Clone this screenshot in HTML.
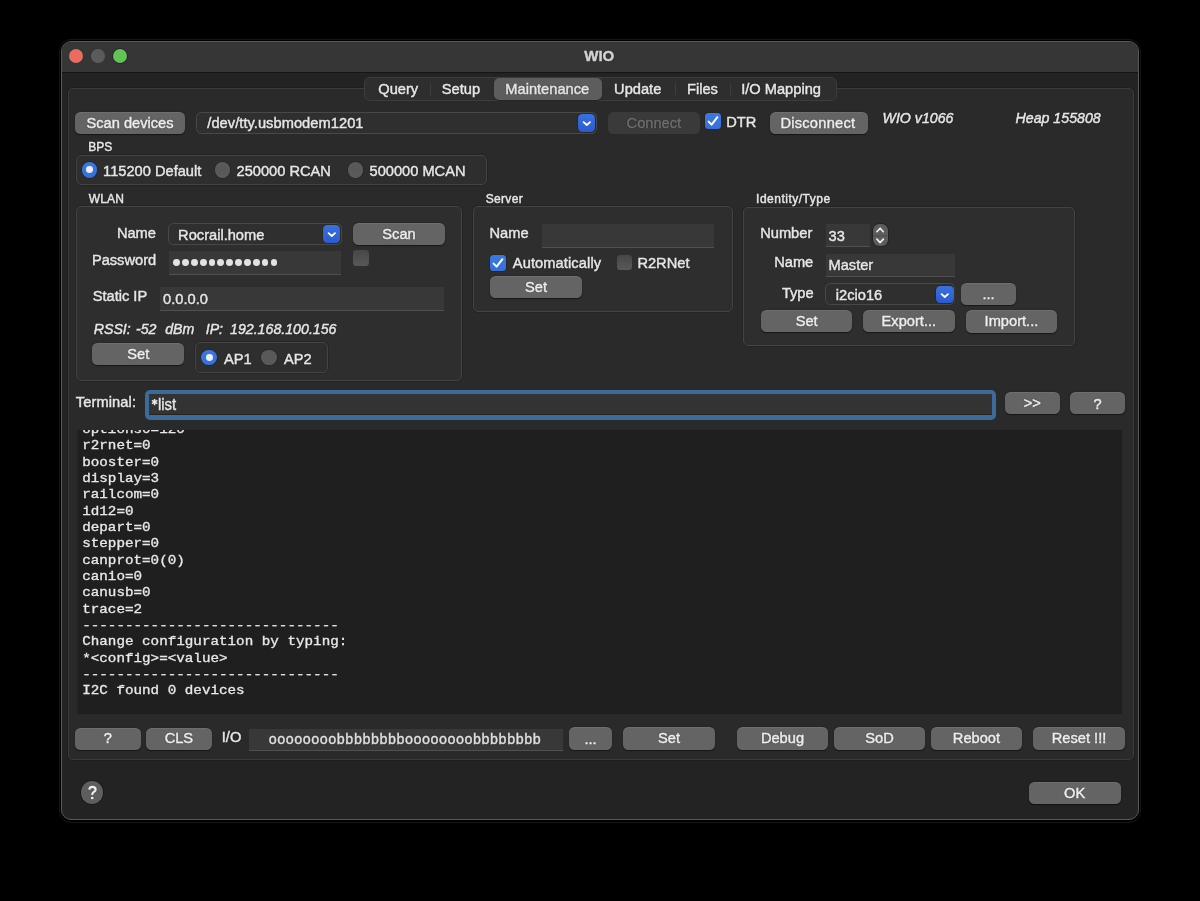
<!DOCTYPE html>
<html><head><meta charset="utf-8">
<style>
*{margin:0;padding:0;box-sizing:border-box}
html,body{width:1200px;height:901px;background:#000;overflow:hidden}
body{font-family:"Liberation Sans",sans-serif;font-size:14.65px;color:#e6e6e6}
#root{position:absolute;left:0;top:0;width:1200px;height:901px;will-change:transform;background:#000;overflow:hidden}
.a{position:absolute}
.win{background:#232323;border-radius:10px;border:1px solid #595959;overflow:hidden}
.title{left:0;top:0;width:100%;height:31px;background:#363636;border-bottom:1px solid #151515}
.tl{width:14px;height:14px;border-radius:50%}
.lbl{white-space:nowrap;line-height:17px;-webkit-text-stroke:0.45px currentColor;text-shadow:0 0 1.2px rgba(0,0,0,.8)}
.btn span{-webkit-text-stroke:0.45px currentColor;text-shadow:0 0 1.2px rgba(0,0,0,.8)}
.btn{background:#646464;border-radius:5.5px;text-align:center;white-space:nowrap;color:#eeeeee;box-shadow:inset 0 1px 0 rgba(255,255,255,.07),0 0.5px 1.2px rgba(0,0,0,.5)}
.btn span{line-height:17px}
.box{border:1px solid #444;background:#2e2e2e;border-radius:5px;box-shadow:0 0 0 0.8px rgba(0,0,0,.18)}
.fld{background:#383838;border-bottom:1px solid #505050}
.combo{background:#2f2f2f;border:1px solid #484848;border-radius:5.5px}
.arrow{background:linear-gradient(#3a70e0,#2a5bd0);border-radius:4.5px;box-shadow:0 0 0 0.6px #2a2415}
.radio{width:15.6px;height:15.6px;border-radius:50%;background:radial-gradient(circle at 50% 45%,#585858 0,#5a5a5a 60%,#666 100%);box-shadow:0 0 0 0.7px #262626}
.radio.on{background:linear-gradient(#3c77e2,#3570da)}
.radio.on::after{content:"";position:absolute;left:4.4px;top:4.4px;width:6.8px;height:6.8px;border-radius:50%;background:#eaf0fa}
.chk{border-radius:3.5px;background:linear-gradient(#474747,#585858)}
.chk.on{background:linear-gradient(#3c77e2,#3570da);box-shadow:0 0 0 0.6px #2a2415}
.it{font-style:italic}
.term{font-family:"Liberation Mono",monospace;font-size:14.25px;line-height:16.33px;color:#e8e8e8;white-space:pre;-webkit-text-stroke:0.35px currentColor}
</style></head><body>
<div id="root">
<div class="a" style="left:59px;top:39px;width:1082px;height:784px;border-radius:12px;border:1px solid #161616"></div>
<div class="a win" style="left:61px;top:41px;width:1078px;height:779px"><div class="a title"></div></div>
<div class="a tl" style="left:69.3px;top:49.2px;background:#ed6a5e;box-shadow:0 0 0 0.8px #1f3a3a"></div>
<div class="a tl" style="left:91.2px;top:49.2px;background:#5b5b5b;box-shadow:0 0 0 0.8px #383838"></div>
<div class="a tl" style="left:113.2px;top:49.2px;background:#61c554;box-shadow:0 0 0 0.8px #2a1a33"></div>
<div class="a lbl " style="left:584.3px;top:47.35px;font-size:15px;width:31px;font-weight:bold;color:#d2d2d2">WIO</div>
<div class="a box" style="left:67.5px;top:88.3px;width:1066.3px;height:672.1px;background:#2a2a2a;border:1.4px solid #3c3c3c;border-radius:5px"></div>
<div class="a" style="left:364.2px;top:77.2px;width:472.8px;height:24px;background:#2e2e2e;border:1px solid #3d3d3d;border-radius:6px"></div>
<div class="a" style="left:494px;top:78.25px;width:107.7px;height:21.5px;background:#5d5d5d;border-radius:5px;box-shadow:0 0.5px 1px rgba(0,0,0,.4)"></div>
<div class="a" style="left:429.8px;top:83px;width:1px;height:12px;background:#3e3e3e"></div>
<div class="a" style="left:675.4px;top:83px;width:1px;height:12px;background:#3e3e3e"></div>
<div class="a" style="left:730.2px;top:83px;width:1px;height:12px;background:#3e3e3e"></div>
<div class="a lbl " style="left:378.25px;top:81.42px;font-size:14.65px;">Query</div>
<div class="a lbl " style="left:441.8px;top:81.42px;font-size:14.65px;">Setup</div>
<div class="a lbl " style="left:505.3px;top:81.42px;font-size:14.65px;">Maintenance</div>
<div class="a lbl " style="left:614.1px;top:81.42px;font-size:14.65px;">Update</div>
<div class="a lbl " style="left:687.0px;top:81.42px;font-size:14.65px;">Files</div>
<div class="a lbl " style="left:741.2px;top:81.42px;font-size:14.65px;">I/O Mapping</div>
<div class="a btn " style="left:75px;top:112px;width:110px;height:22px;"><span style="position:absolute;left:0;right:0;top:3.22px;font-size:14.65px;">Scan devices</span></div>
<div class="a combo" style="left:196.3px;top:112.3px;width:400.5px;height:21.4px"></div>
<div class="a arrow" style="left:577.5px;top:114.1px;width:17.8px;height:17.8px"><svg width="18" height="18" viewBox="0 0 18 18" style="position:absolute;left:0;top:0"><path d="M5.6 8.1 L8.8 11.0 L12.0 8.1" fill="none" stroke="#fff" stroke-width="1.8" stroke-linecap="round" stroke-linejoin="round"/></svg></div>
<div class="a lbl " style="left:207.3px;top:115.02px;font-size:14.65px;letter-spacing:0.05px">/dev/tty.usbmodem1201</div>
<div class="a btn " style="left:608px;top:112px;width:91.7px;height:21.7px;background:#3a3a3a;box-shadow:none"><span style="position:absolute;left:0;right:0;top:2.72px;font-size:14.65px;color:#6e6e6e">Connect</span></div>
<div class="a chk on" style="left:705px;top:113px;width:15.5px;height:15.5px"><svg width="16" height="16" viewBox="0 0 16 16" style="position:absolute;left:0;top:0"><path d="M3.6 8.6 L6.6 11.6 L12.4 4.2" fill="none" stroke="#fff" stroke-width="2" stroke-linecap="round" stroke-linejoin="round"/></svg></div>
<div class="a lbl " style="left:726.3px;top:114.12px;font-size:14.65px;">DTR</div>
<div class="a btn " style="left:770.3px;top:112px;width:97.7px;height:22.2px;"><span style="position:absolute;left:0;right:0;top:2.82px;font-size:14.65px;letter-spacing:0.25px;padding-right:2.6px">Disconnect</span></div>
<div class="a lbl it" style="left:882.5px;top:110.38px;font-size:14.2px;">WIO v1066</div>
<div class="a lbl it" style="left:1015.5px;top:110.18px;font-size:14.2px;">Heap 155808</div>
<div class="a lbl " style="left:88.2px;top:139.14px;font-size:12px;">BPS</div>
<div class="a box" style="left:75.5px;top:155px;width:411.5px;height:30px;"></div>
<div class="a radio on" style="left:81.65px;top:162.05px"></div>
<div class="a lbl " style="left:103.1px;top:162.72px;font-size:14.65px;">115200 Default</div>
<div class="a radio" style="left:214.5px;top:162.2px"></div>
<div class="a lbl " style="left:236.5px;top:162.72px;font-size:14.65px;">250000 RCAN</div>
<div class="a radio" style="left:347.5px;top:162.2px"></div>
<div class="a lbl " style="left:369.5px;top:162.72px;font-size:14.65px;">500000 MCAN</div>
<div class="a lbl " style="left:88.7px;top:190.94px;font-size:12px;letter-spacing:0.15px">WLAN</div>
<div class="a box" style="left:75.5px;top:206.3px;width:386.0px;height:174.7px;"></div>
<div class="a lbl " style="left:116.9px;top:225.22px;font-size:14.65px;">Name</div>
<div class="a combo" style="left:168.3px;top:223.3px;width:173.7px;height:22.0px"></div>
<div class="a arrow" style="left:322.5px;top:225.3px;width:17.8px;height:17.8px"><svg width="18" height="18" viewBox="0 0 18 18" style="position:absolute;left:0;top:0"><path d="M5.6 8.1 L8.8 11.0 L12.0 8.1" fill="none" stroke="#fff" stroke-width="1.8" stroke-linecap="round" stroke-linejoin="round"/></svg></div>
<div class="a lbl " style="left:178.1px;top:226.92px;font-size:14.65px;">Rocrail.home</div>
<div class="a btn " style="left:353px;top:223px;width:92px;height:22.3px;"><span style="position:absolute;left:0;right:0;top:2.92px;font-size:14.65px;">Scan</span></div>
<div class="a lbl " style="left:91.9px;top:252.22px;font-size:14.65px;">Password</div>
<div class="a fld" style="left:169.2px;top:251.3px;width:172.0px;height:23.4px;"></div>
<div class="a" style="left:173.2px;top:259.1px;width:6.8px;height:6.8px;border-radius:50%;background:#e2e2e2"></div><div class="a" style="left:182.05px;top:259.1px;width:6.8px;height:6.8px;border-radius:50%;background:#e2e2e2"></div><div class="a" style="left:190.9px;top:259.1px;width:6.8px;height:6.8px;border-radius:50%;background:#e2e2e2"></div><div class="a" style="left:199.75px;top:259.1px;width:6.8px;height:6.8px;border-radius:50%;background:#e2e2e2"></div><div class="a" style="left:208.6px;top:259.1px;width:6.8px;height:6.8px;border-radius:50%;background:#e2e2e2"></div><div class="a" style="left:217.45px;top:259.1px;width:6.8px;height:6.8px;border-radius:50%;background:#e2e2e2"></div><div class="a" style="left:226.3px;top:259.1px;width:6.8px;height:6.8px;border-radius:50%;background:#e2e2e2"></div><div class="a" style="left:235.15px;top:259.1px;width:6.8px;height:6.8px;border-radius:50%;background:#e2e2e2"></div><div class="a" style="left:244.0px;top:259.1px;width:6.8px;height:6.8px;border-radius:50%;background:#e2e2e2"></div><div class="a" style="left:252.85px;top:259.1px;width:6.8px;height:6.8px;border-radius:50%;background:#e2e2e2"></div><div class="a" style="left:261.7px;top:259.1px;width:6.8px;height:6.8px;border-radius:50%;background:#e2e2e2"></div><div class="a" style="left:270.55px;top:259.1px;width:6.8px;height:6.8px;border-radius:50%;background:#e2e2e2"></div>
<div class="a chk" style="left:353px;top:250px;width:15.5px;height:15.5px"></div>
<div class="a lbl " style="left:92.7px;top:287.82px;font-size:14.65px;">Static IP</div>
<div class="a fld" style="left:160px;top:287.3px;width:284px;height:23.4px;"></div>
<div class="a lbl " style="left:163.1px;top:291.02px;font-size:14.65px;">0.0.0.0</div>
<div class="a lbl it" style="left:93.7px;top:320.98px;font-size:14.2px;">RSSI:</div>
<div class="a lbl it" style="left:135.95px;top:320.98px;font-size:14.2px;">-52</div>
<div class="a lbl it" style="left:165.2px;top:320.98px;font-size:14.2px;">dBm</div>
<div class="a lbl it" style="left:205.7px;top:320.98px;font-size:14.2px;">IP:</div>
<div class="a lbl it" style="left:230.0px;top:320.98px;font-size:14.2px;">192.168.100.156</div>
<div class="a btn " style="left:92.4px;top:343.3px;width:91.8px;height:21.8px;"><span style="position:absolute;left:0;right:0;top:2.92px;font-size:14.65px;">Set</span></div>
<div class="a box" style="left:195.2px;top:342.2px;width:132.8px;height:30.4px;"></div>
<div class="a radio on" style="left:201.4px;top:349.5px"></div>
<div class="a lbl " style="left:223.9px;top:350.62px;font-size:14.65px;">AP1</div>
<div class="a radio" style="left:261.2px;top:349.5px"></div>
<div class="a lbl " style="left:283.9px;top:350.62px;font-size:14.65px;">AP2</div>
<div class="a lbl " style="left:485.8px;top:190.94px;font-size:12px;letter-spacing:0.3px">Server</div>
<div class="a box" style="left:473.3px;top:206.3px;width:259.4px;height:106.2px;"></div>
<div class="a lbl " style="left:489.5px;top:224.82px;font-size:14.65px;">Name</div>
<div class="a fld" style="left:541.8px;top:224px;width:172.2px;height:23.5px;"></div>
<div class="a chk on" style="left:490.3px;top:255px;width:15.5px;height:15.5px"><svg width="16" height="16" viewBox="0 0 16 16" style="position:absolute;left:0;top:0"><path d="M3.6 8.6 L6.6 11.6 L12.4 4.2" fill="none" stroke="#fff" stroke-width="2" stroke-linecap="round" stroke-linejoin="round"/></svg></div>
<div class="a lbl " style="left:512.8px;top:255.22px;font-size:14.65px;letter-spacing:0.1px">Automatically</div>
<div class="a chk" style="left:616.7px;top:254.7px;width:15.5px;height:15.5px"></div>
<div class="a lbl " style="left:637.4px;top:255.02px;font-size:14.65px;">R2RNet</div>
<div class="a btn " style="left:490.3px;top:276.3px;width:91.5px;height:22.2px;"><span style="position:absolute;left:0;right:0;top:2.62px;font-size:14.65px;">Set</span></div>
<div class="a lbl " style="left:756.1px;top:190.74px;font-size:12px;letter-spacing:0.5px">Identity/Type</div>
<div class="a box" style="left:743.3px;top:206.5px;width:331.3px;height:139.9px;"></div>
<div class="a lbl " style="left:760.2px;top:224.52px;font-size:14.65px;">Number</div>
<div class="a fld" style="left:826px;top:224px;width:44px;height:22.7px;"></div>
<div class="a lbl " style="left:828.6px;top:227.92px;font-size:14.65px;">33</div>
<div class="a" style="left:873.4px;top:223.7px;width:14.4px;height:22.5px;background:#5c5c5c;border-radius:6px;box-shadow:0 0 0.5px 0.6px rgba(0,0,0,.45)"><svg width="15" height="23" viewBox="0 0 15 23" style="position:absolute;left:0;top:0"><path d="M0.5 11.8 H14" stroke="#4c4c4c" stroke-width="1"/><path d="M3.9 7.7 L7.1 4.2 L10.3 7.7 M3.9 15.2 L7.1 18.6 L10.3 15.2" fill="none" stroke="#eeeeee" stroke-width="1.7" stroke-linecap="round" stroke-linejoin="round"/></svg></div>
<div class="a lbl " style="left:774.2px;top:253.92px;font-size:14.65px;">Name</div>
<div class="a fld" style="left:826px;top:253.6px;width:129px;height:23.1px;"></div>
<div class="a lbl " style="left:828.5px;top:257.22px;font-size:14.65px;">Master</div>
<div class="a lbl " style="left:781.9px;top:284.97px;font-size:14.65px;">Type</div>
<div class="a combo" style="left:824.9px;top:283.3px;width:130.5px;height:21.8px"></div>
<div class="a arrow" style="left:936px;top:285.5px;width:17.8px;height:17.8px"><svg width="18" height="18" viewBox="0 0 18 18" style="position:absolute;left:0;top:0"><path d="M5.6 8.1 L8.8 11.0 L12.0 8.1" fill="none" stroke="#fff" stroke-width="1.8" stroke-linecap="round" stroke-linejoin="round"/></svg></div>
<div class="a lbl " style="left:835.8px;top:286.72px;font-size:14.65px;">i2cio16</div>
<div class="a btn " style="left:961px;top:283px;width:55px;height:22.2px;"><span style="position:absolute;left:0;right:0;top:2.52px;font-size:14.65px;">...</span></div>
<div class="a btn " style="left:760.9px;top:310px;width:91.5px;height:22.4px;"><span style="position:absolute;left:0;right:0;top:2.97px;font-size:14.65px;">Set</span></div>
<div class="a btn " style="left:862.9px;top:310px;width:91.9px;height:22.4px;"><span style="position:absolute;left:0;right:0;top:3.02px;font-size:14.65px;">Export...</span></div>
<div class="a btn " style="left:965.7px;top:310px;width:91.5px;height:22.5px;"><span style="position:absolute;left:0;right:0;top:3.02px;font-size:14.65px;">Import...</span></div>
<div class="a lbl " style="left:75.8px;top:393.72px;font-size:14.65px;letter-spacing:0.1px">Terminal:</div>
<div class="a" style="left:145px;top:390px;width:851px;height:29.75px;border-radius:5px;background:#3c6a9a"></div>
<div class="a" style="left:149.3px;top:394px;width:842.9px;height:21px;background:#333333;border-bottom:1px solid #2a2418"></div>
<div class="a lbl " style="left:157.9px;top:395.95px;font-size:16px;transform:scaleX(.93);transform-origin:0 0">list</div>
<svg class="a" style="left:145px;top:390px" width="20" height="25" viewBox="145 390 20 25"><path d="M154.6 398.9 V405.2 M151.9 400.45 L157.3 403.65 M151.9 403.65 L157.3 400.45" stroke="#ececec" stroke-width="1.5"/></svg>
<div class="a btn " style="left:1004.7px;top:392px;width:55.0px;height:22.2px;"><span style="position:absolute;left:0;right:0;top:2.72px;font-size:14.65px;">&gt;&gt;</span></div>
<div class="a btn " style="left:1070.2px;top:392px;width:54.8px;height:22.2px;"><span style="position:absolute;left:0;right:0;top:3.52px;font-size:14.65px;">?</span></div>
<div class="a" style="left:76px;top:430px;width:1046.3px;height:284.2px;background:#1f1f1f;overflow:hidden;border-left:2px solid #262626">
<div class="a term" style="left:4.2px;top:-8.96px;transform:scaleY(.9);transform-origin:0 11.96px">options0=120</div>
<div class="a term" style="left:4.2px;top:7.37px;transform:scaleY(.9);transform-origin:0 11.96px">r2rnet=0</div>
<div class="a term" style="left:4.2px;top:23.7px;transform:scaleY(.9);transform-origin:0 11.96px">booster=0</div>
<div class="a term" style="left:4.2px;top:40.03px;transform:scaleY(.9);transform-origin:0 11.96px">display=3</div>
<div class="a term" style="left:4.2px;top:56.36px;transform:scaleY(.9);transform-origin:0 11.96px">railcom=0</div>
<div class="a term" style="left:4.2px;top:72.69px;transform:scaleY(.9);transform-origin:0 11.96px">id12=0</div>
<div class="a term" style="left:4.2px;top:89.02px;transform:scaleY(.9);transform-origin:0 11.96px">depart=0</div>
<div class="a term" style="left:4.2px;top:105.35px;transform:scaleY(.9);transform-origin:0 11.96px">stepper=0</div>
<div class="a term" style="left:4.2px;top:121.68px;transform:scaleY(.9);transform-origin:0 11.96px">canprot=0(0)</div>
<div class="a term" style="left:4.2px;top:138.01px;transform:scaleY(.9);transform-origin:0 11.96px">canio=0</div>
<div class="a term" style="left:4.2px;top:154.34px;transform:scaleY(.9);transform-origin:0 11.96px">canusb=0</div>
<div class="a term" style="left:4.2px;top:170.67px;transform:scaleY(.9);transform-origin:0 11.96px">trace=2</div>
<div class="a term" style="left:4.2px;top:187.0px;transform:scaleY(.9);transform-origin:0 11.96px">------------------------------</div>
<div class="a term" style="left:4.2px;top:203.33px;transform:scaleY(.9);transform-origin:0 11.96px">Change configuration by typing:</div>
<div class="a term" style="left:4.2px;top:219.66px;transform:scaleY(.9);transform-origin:0 11.96px">*&lt;config&gt;=&lt;value&gt;</div>
<div class="a term" style="left:4.2px;top:235.99px;transform:scaleY(.9);transform-origin:0 11.96px">------------------------------</div>
<div class="a term" style="left:4.2px;top:252.32px;transform:scaleY(.9);transform-origin:0 11.96px">I2C found 0 devices</div>
</div>
<div class="a btn " style="left:75.2px;top:727.5px;width:65.5px;height:22.5px;"><span style="position:absolute;left:0;right:0;top:2.72px;font-size:14.65px;">?</span></div>
<div class="a btn " style="left:146px;top:727.5px;width:65.8px;height:22.5px;"><span style="position:absolute;left:0;right:0;top:2.72px;font-size:14.65px;">CLS</span></div>
<div class="a lbl " style="left:221.8px;top:729.22px;font-size:14.65px;">I/O</div>
<div class="a fld" style="left:248.5px;top:728.5px;width:314.0px;height:22.3px;"></div>
<div class="a term" style="left:268.5px;top:731.72px;font-size:14.2px;letter-spacing:0px;line-height:17px;color:#e0e0e0">oooooooobbbbbbbboooooooobbbbbbbb</div>
<div class="a btn " style="left:568.7px;top:727px;width:43.8px;height:23px;"><span style="position:absolute;left:0;right:0;top:3.52px;font-size:14.65px;">...</span></div>
<div class="a btn " style="left:623px;top:727px;width:92px;height:23px;"><span style="position:absolute;left:0;right:0;top:3.22px;font-size:14.65px;">Set</span></div>
<div class="a btn " style="left:736.7px;top:727px;width:91.6px;height:23px;"><span style="position:absolute;left:0;right:0;top:3.22px;font-size:14.65px;">Debug</span></div>
<div class="a btn " style="left:833.7px;top:727px;width:91.6px;height:23px;"><span style="position:absolute;left:0;right:0;top:3.22px;font-size:14.65px;">SoD</span></div>
<div class="a btn " style="left:930.6px;top:727px;width:91.7px;height:23px;"><span style="position:absolute;left:0;right:0;top:3.22px;font-size:14.65px;">Reboot</span></div>
<div class="a btn " style="left:1033.3px;top:727px;width:91.5px;height:23px;"><span style="position:absolute;left:0;right:0;top:3.22px;font-size:14.65px;">Reset !!!</span></div>
<div class="a" style="left:81px;top:781px;width:22.3px;height:22.5px;border-radius:50%;background:#5e5e5e;box-shadow:0 0 0 0.8px #161616"></div>
<svg class="a" style="left:0;top:0" width="1200" height="901" viewBox="0 0 1200 901"><path d="M89.3 789.7 C89.5 787.6 90.8 786.9 92.3 786.9 C94.2 786.9 95.6 788 95.6 789.5 C95.6 790.9 94.7 791.5 93.6 792.2 C92.7 792.8 92.2 793.4 92.2 794.9" fill="none" stroke="#efefef" stroke-width="2.1"/><rect x="91.05" y="796.9" width="2.3" height="2.2" fill="#efefef"/></svg>
<div class="a btn " style="left:1028.6px;top:781.9px;width:92.1px;height:22.2px;"><span style="position:absolute;left:0;right:0;top:3.32px;font-size:14.65px;">OK</span></div>
</div>
</body></html>
